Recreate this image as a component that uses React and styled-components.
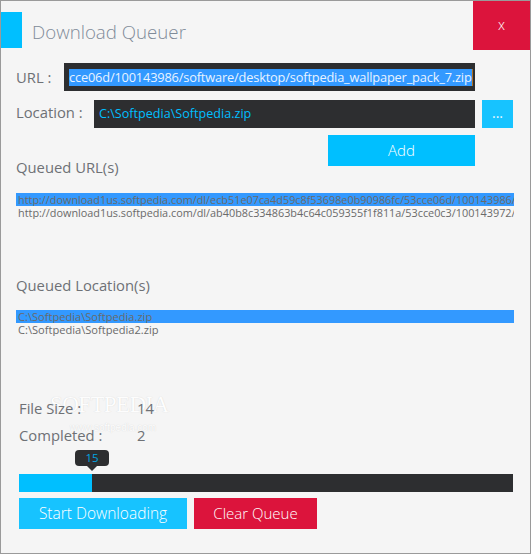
import React from "react";
import styled, { createGlobalStyle } from "styled-components";

const Global = createGlobalStyle`
  html, body { margin: 0; padding: 0; background: #f5f5f5; }
  * { box-sizing: border-box; }
`;

const Win = styled.div`
  position: relative;
  width: 531px;
  height: 554px;
  background: #f5f5f5;
  border: 1px solid #9a9a9a;
  font-family: "Open Sans", "Noto Sans", sans-serif;
  color: #6a6e73;
  overflow: hidden;
  display: flex;
  flex-direction: column;
`;

const TitleBar = styled.header`
  display: flex;
  align-items: flex-start;
  height: 49px;
  margin-left: -1px;
`;

const Accent = styled.div`
  width: 22px;
  height: 36px;
  margin-top: 11px;
  background: #00bfff;
`;

const Title = styled.h1`
  margin: 18px 0 0 10px;
  font-size: 18.7px;
  line-height: 26px;
  font-weight: 300;
  color: #7f8b99;
  flex: 1;
`;

const Close = styled.button`
  width: 57px;
  height: 49px;
  border: 0;
  padding: 0 0 2px;
  background: #dc143c;
  color: #fff;
  font: 300 14px "Open Sans", sans-serif;
`;

const Content = styled.main`
  position: relative;
  z-index: 1;
  display: flex;
  flex-direction: column;
  padding: 13px 0 0 15px;
`;

const FieldRow = styled.div`
  display: flex;
  align-items: stretch;
  height: 28px;
  margin-bottom: ${(p) => p.$gap}px;
`;

const FieldLabel = styled.label`
  width: ${(p) => p.$w}px;
  font-size: 14.8px;
  line-height: ${(p) => p.$line}px;
  color: #6e7175;
`;

const Field = styled.div`
  width: ${(p) => p.$w}px;
  background: #2d2e30;
  color: #00bfff;
  font-size: 12.6px;
  line-height: 28px;
  padding: 0 4px 0 5px;
  overflow: hidden;
  white-space: nowrap;
  display: flex;
  align-items: center;
`;

const Selected = styled.span`
  background: #3399ff;
  color: #e8f3ff;
  height: 17px;
  line-height: 17px;
  flex: 1;
  font-size: 12.8px;
  letter-spacing: -0.17px;
  border-right: 1px solid #b07020;
`;

const Browse = styled.button`
  width: 31px;
  margin-left: 7px;
  border: 0;
  background: #17c3ff;
  color: #f0faff;
  font: 400 14px "Open Sans", sans-serif;
  padding: 0 0 3px;
`;

const AddRow = styled.div`
  display: flex;
  padding-left: 312px;
`;

const Btn = styled.button`
  width: ${(p) => p.$w}px;
  height: 31px;
  border: 0;
  padding: 0 0 1px;
  background: ${(p) => p.$bg};
  color: #fff;
  font: 300 ${(p) => p.$size}px "Open Sans", sans-serif;
`;

const SectionLabel = styled.h2`
  margin: ${(p) => p.$top}px 0 ${(p) => p.$bottom}px;
  font-size: 14.8px;
  line-height: 20px;
  font-weight: 400;
  color: #6e7175;
`;

const List = styled.ul`
  list-style: none;
  margin: 0;
  padding: 0;
  width: 498px;
`;

const Item = styled.li`
  height: 13px;
  line-height: 13px;
  padding-left: 2px;
  font-size: ${(p) => p.$size}px;
  white-space: nowrap;
  overflow: hidden;
  color: #6a6a6a;
  background: ${(p) => (p.$active ? "#3399ff" : "transparent")};
`;

const Stats = styled.section`
  margin: 62px 0 0 3px;
  display: grid;
  grid-template-columns: 118px auto;
  justify-content: start;
  row-gap: 7px;
  font-size: 14.8px;
  line-height: 20px;
  color: #6e7175;
`;

const Progress = styled.div`
  position: relative;
  margin: 29px 0 0 3px;
  width: 494px;
  height: 18px;
  background: #2d2e30;
`;

const Fill = styled.div`
  height: 100%;
  background: #00bfff;
`;

const Tip = styled.div`
  position: absolute;
  left: 56px;
  top: -24px;
  width: 34px;
  height: 16px;
  border-radius: 4px;
  background: #2d2e30;
  color: #00a5e0;
  font-size: 11.5px;
  line-height: 16px;
  text-align: center;
  &::after {
    content: "";
    position: absolute;
    left: 12px;
    top: 16px;
    border: 5px solid transparent;
    border-top-color: #2d2e30;
    border-bottom: 0;
  }
`;

const Actions = styled.div`
  display: flex;
  gap: 7px;
  margin: 6px 0 0 3px;
`;

const Watermark = styled.div`
  position: absolute;
  left: 49px;
  top: 391px;
  white-space: nowrap;
  color: #fdfdfd;
  text-shadow: 0 0 1px #cfcfcf;
  font-family: "Liberation Serif", serif;
  font-size: 23px;
  letter-spacing: -0.6px;
  line-height: 26px;
  pointer-events: none;
`;

const WatermarkUrl = styled.div`
  font-family: "Liberation Sans", sans-serif;
  font-size: 10px;
  letter-spacing: 0;
  line-height: 12px;
  margin: 4px 0 0 20px;
`;

const urls = [
  "http://download1us.softpedia.com/dl/ecb51e07ca4d59c8f53698e0b90986fc/53cce06d/100143986/software/desktop/softpedia_wallpaper_pack_7.zip",
  "http://download1us.softpedia.com/dl/ab40b8c334863b4c64c059355f1f811a/53cce0c3/100143972/software/desktop/softpedia_wallpaper_pack_6.zip",
];
const locations = ["C:\\Softpedia\\Softpedia.zip", "C:\\Softpedia\\Softpedia2.zip"];

export default function App() {
  return (
    <Win>
      <Global />
      <TitleBar>
        <Accent />
        <Title>Download Queuer</Title>
        <Close>x</Close>
      </TitleBar>
      <Content>
        <FieldRow $gap={9}>
          <FieldLabel $w={48} $line={28}>URL :</FieldLabel>
          <Field $w={411}>
            <Selected>cce06d/100143986/software/desktop/softpedia_wallpaper_pack_7.zip</Selected>
          </Field>
        </FieldRow>
        <FieldRow $gap={7}>
          <FieldLabel $w={78} $line={25}>Location :</FieldLabel>
          <Field $w={381}>C:\Softpedia\Softpedia.zip</Field>
          <Browse>...</Browse>
        </FieldRow>
        <AddRow>
          <Btn $w={147} $bg="#00bfff" $size={15}>Add</Btn>
        </AddRow>
        <SectionLabel $top={-9} $bottom={16}>Queued URL(s)</SectionLabel>
        <List>
          {urls.map((u, i) => (
            <Item key={u} $active={i === 0} $size={10.85}>{u}</Item>
          ))}
        </List>
        <SectionLabel $top={56} $bottom={15}>Queued Location(s)</SectionLabel>
        <List>
          {locations.map((l, i) => (
            <Item key={l} $active={i === 0} $size={11.1}>{l}</Item>
          ))}
        </List>
        <Stats>
          <span>File Size :</span><span>14</span>
          <span>Completed :</span><span>2</span>
        </Stats>
        <Progress>
          <Fill style={{ width: `${(15 / 100) * 100 - 0.2}%` }} />
          <Tip>15</Tip>
        </Progress>
        <Actions>
          <Btn $w={168} $bg="#17c3ff" $size={15.5}>Start Downloading</Btn>
          <Btn $w={123} $bg="#dc143c" $size={15}>Clear Queue</Btn>
        </Actions>
      </Content>
      <Watermark>
        SOFTPEDIA
        <WatermarkUrl>www.softpedia.com</WatermarkUrl>
      </Watermark>
    </Win>
  );
}
